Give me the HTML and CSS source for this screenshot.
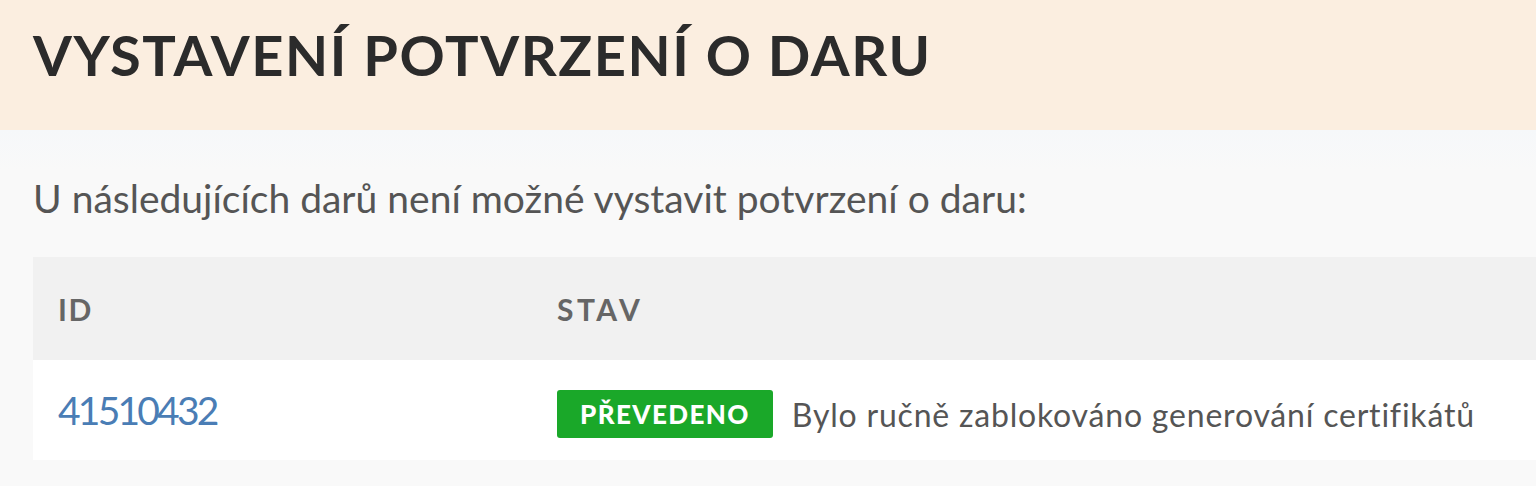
FILE: index.html
```html
<!DOCTYPE html>
<html lang="cs">
<head>
<meta charset="utf-8">
<link rel="stylesheet" href="styles.css">
</head>
<body>
<header class="page-header">
  <h1 class="title">VYSTAVENÍ POTVRZENÍ O DARU</h1>
</header>
<main class="content">
  <p class="intro">U následujících darů není možné vystavit potvrzení o daru:</p>
  <table class="table">
    <thead>
      <tr><th class="col-id">ID</th><th class="col-state">STAV</th></tr>
    </thead>
    <tbody>
      <tr>
        <td class="col-id"><a class="id-link" href="#">41510432</a></td>
        <td class="col-state state-cell"><span class="badge">PŘEVEDENO</span><span class="reason">Bylo ručně zablokováno generování certifikátů</span></td>
      </tr>
    </tbody>
  </table>
</main>
</body>
</html>
```

FILE: styles.css
```css
html, body {
  margin: 0;
  padding: 0;
}
body {
  width: 1536px;
  height: 486px;
  overflow: hidden;
  background: #f9f9f9;
  font-family: Lato, "Open Sans", sans-serif;
  color: #333;
}
.page-header {
  background: #fbeee0;
  height: 130px;
  padding: 27px 0 0 33px;
  box-sizing: border-box;
}
.title {
  margin: 0;
  font-size: 56px;
  font-weight: 700;
  color: #2b2b2b;
  letter-spacing: 1.6px;
  line-height: 1;
}
.content {
  padding: 45px 0 0 33px;
  background: linear-gradient(#f6f8fa 0, #f9f9f9 40px);
}
.intro {
  margin: 0 0 36px 0;
  font-size: 39px;
  color: #555;
  line-height: 46px;
}
.table {
  border-collapse: collapse;
  width: 1520px;
}
.table th,
.table td {
  box-sizing: border-box;
  text-align: left;
  vertical-align: middle;
}
.table th {
  background: #f1f1f1;
  height: 103px;
  font-size: 30px;
  font-weight: 700;
  color: #666;
  letter-spacing: 1.5px;
}
.table th.col-state {
  letter-spacing: 3.5px;
}
.table td {
  background: #fff;
  height: 100px;
}
.col-id {
  width: 496px;
  padding: 0 0 0 25px;
}
.col-state {
  padding: 0 0 0 28px;
}
.table td.state-cell {
  padding-top: 8px;
}
.id-link {
  color: #4a7db5;
  text-decoration: none;
  font-size: 39px;
  letter-spacing: -2.8px;
}
.badge {
  display: inline-block;
  background: #1aa829;
  color: #fff;
  font-size: 26px;
  font-weight: 900;
  line-height: 28px;
  padding: 10px 23px;
  border-radius: 3px;
  vertical-align: middle;
  letter-spacing: 1.4px;
}
.reason {
  font-size: 32px;
  color: #555;
  margin-left: 19px;
  vertical-align: middle;
  letter-spacing: 0.8px;
}
```
